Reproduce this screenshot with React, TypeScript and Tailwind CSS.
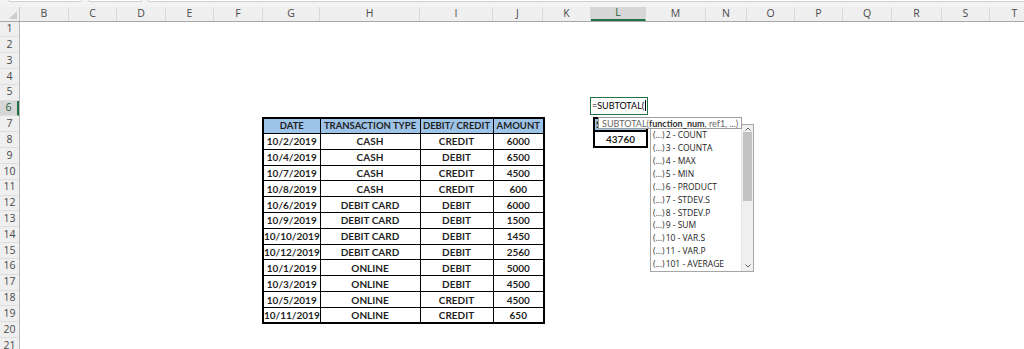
import React from 'react';

const columns = [
  { label: 'B', w: 'w-[49px]' },
  { label: 'C', w: 'w-[48px]' },
  { label: 'D', w: 'w-[49px]' },
  { label: 'E', w: 'w-[48px]' },
  { label: 'F', w: 'w-[49px]' },
  { label: 'G', w: 'w-[57px]' },
  { label: 'H', w: 'w-[100px]' },
  { label: 'I', w: 'w-[73px]' },
  { label: 'J', w: 'w-[50px]' },
  { label: 'K', w: 'w-[48px]' },
  { label: 'L', w: 'w-[55px]' },
  { label: 'M', w: 'w-[60px]' },
  { label: 'N', w: 'w-[41px]' },
  { label: 'O', w: 'w-[48px]' },
  { label: 'P', w: 'w-[48px]' },
  { label: 'Q', w: 'w-[49px]' },
  { label: 'R', w: 'w-[50px]' },
  { label: 'S', w: 'w-[48px]' },
  { label: 'T', w: 'w-[50px]' },
];

const transactions = [
  ['10/2/2019', 'CASH', 'CREDIT', '6000'],
  ['10/4/2019', 'CASH', 'DEBIT', '6500'],
  ['10/7/2019', 'CASH', 'CREDIT', '4500'],
  ['10/8/2019', 'CASH', 'CREDIT', '600'],
  ['10/6/2019', 'DEBIT CARD', 'DEBIT', '6000'],
  ['10/9/2019', 'DEBIT CARD', 'DEBIT', '1500'],
  ['10/10/2019', 'DEBIT CARD', 'DEBIT', '1450'],
  ['10/12/2019', 'DEBIT CARD', 'DEBIT', '2560'],
  ['10/1/2019', 'ONLINE', 'DEBIT', '5000'],
  ['10/3/2019', 'ONLINE', 'DEBIT', '4500'],
  ['10/5/2019', 'ONLINE', 'CREDIT', '4500'],
  ['10/11/2019', 'ONLINE', 'CREDIT', '650'],
];

const functionList = [
  '2 - COUNT',
  '3 - COUNTA',
  '4 - MAX',
  '5 - MIN',
  '6 - PRODUCT',
  '7 - STDEV.S',
  '8 - STDEV.P',
  '9 - SUM',
  '10 - VAR.S',
  '11 - VAR.P',
  '101 - AVERAGE',
];

const rowNumbers = Array.from({ length: 21 }, (_, i) => i + 1);

const uiFont = "font-['Open_Sans','Noto_Sans',sans-serif]";
const cellFont = "font-['Lato','Liberation_Sans',sans-serif]";

export default function App() {
  return (
    <div className="w-[1024px] h-[349px] overflow-hidden bg-white">
      {/* strip under the formula bar */}
      <div className="h-[7px] bg-[#f3f3f3] flex gap-[18px] pl-[8px]">
        <div className="w-[74px] h-[2px] bg-white border border-t-0 border-[#cfcfcf] rounded-b-[3px]" />
        <div className="w-[54px] h-[2px] bg-white border border-t-0 border-[#cfcfcf] rounded-b-[3px] -ml-[12px] mr-[-12px]" />
        <div className="flex-1 h-[2px] bg-white border border-t-0 border-r-0 border-[#cfcfcf] rounded-bl-[3px]" />
      </div>

      {/* column headers */}
      <div className={`flex h-[14.5px] bg-[#efefef] border-b border-[#a8a8a8] text-[10.5px] text-[#4a4a4a] ${uiFont}`}>
        <div className="w-[20px] shrink-0 relative border-r border-[#c8c8c8]">
          <div className="absolute right-[2px] bottom-[2px] w-0 h-0 border-l-[8px] border-l-transparent border-b-[8px] border-b-[#cdcdcd]" />
        </div>
        {columns.map(c => (
          <div
            key={c.label}
            className={`${c.w} shrink-0 flex items-center justify-center border-r border-[#d8d8d8] ${
              c.label === 'L' ? 'bg-[#d6d6d6] border-b-2 border-b-[#217346] text-[#1e5e36]' : ''
            }`}
          >
            {c.label}
          </div>
        ))}
      </div>

      <div className="flex">
        {/* row headers */}
        <div className={`w-[20px] shrink-0 flex flex-col bg-[#efefef] border-r border-[#b8b8b8] text-[10.5px] text-[#4a4a4a] ${uiFont}`}>
          {rowNumbers.map(n => (
            <div
              key={n}
              className={`h-[15.84px] shrink-0 flex items-center justify-center border-b border-[#dedede] ${
                n === 6 ? 'bg-[#d6d6d6] border-r-2 border-r-[#217346] text-[#1e5e36]' : ''
              }`}
            >
              {n}
            </div>
          ))}
        </div>

        {/* sheet body */}
        <div className="relative flex-1 flex flex-col">
          <div className="h-[79.2px] shrink-0" />

          {/* row 6: cell being edited */}
          <div className="h-[15.84px] shrink-0 flex">
            <div className="w-[570px] shrink-0" />
            <div className={`relative -top-[4px] w-[58px] h-[18px] border-[1.5px] border-[#217346] bg-white flex items-center pl-[1px] text-[9px] text-black whitespace-nowrap ${cellFont}`}>
              <span>=SUBTOTAL(</span>
              <span className="inline-block w-px h-[11px] bg-black ml-px" />
            </div>
          </div>

          {/* rows 7 - 19 */}
          <div className="flex">
            <div className="w-[242px] shrink-0" />
            <table className={`table-fixed w-[281px] border-collapse border-2 border-black text-[10px] font-bold text-[#1f1f1f] ${cellFont}`}>
              <colgroup>
                <col className="w-[57px]" />
                <col className="w-[100px]" />
                <col className="w-[73px]" />
                <col className="w-[51px]" />
              </colgroup>
              <thead>
                <tr className="bg-[#9dc3e6] text-[9.5px]">
                  <th className="h-[15.84px] p-0 border border-black leading-none">DATE</th>
                  <th className="h-[15.84px] p-0 border border-black leading-none whitespace-nowrap">TRANSACTION TYPE</th>
                  <th className="h-[15.84px] p-0 border border-black leading-none whitespace-nowrap">DEBIT/ CREDIT</th>
                  <th className="h-[15.84px] p-0 border border-black leading-none">AMOUNT</th>
                </tr>
              </thead>
              <tbody>
                {transactions.map(row => (
                  <tr key={row[0]}>
                    {row.map((v, i) => (
                      <td key={i} className="h-[15.84px] p-0 border border-black text-center leading-none whitespace-nowrap">
                        {v}
                      </td>
                    ))}
                  </tr>
                ))}
              </tbody>
            </table>
            <div className="w-[48px] shrink-0" />
            <div className={`flex flex-col text-[10px] font-bold text-[#1f1f1f] ${cellFont}`}>
              <div className="w-[55px] h-[15.84px] bg-[#9dc3e6] border-2 border-black flex items-center pl-[1px]">S</div>
              <div className="w-[55px] h-[16px] border-2 border-t-0 border-black flex items-center justify-center">43760</div>
            </div>
          </div>

          {/* function list dropdown */}
          <div className={`absolute left-[630px] top-[102.5px] w-[104px] h-[148px] bg-white border border-[#a6a6a6] flex ${uiFont}`}>
            <div className="flex-1 flex flex-col pt-[4px] pl-[2px]">
              {functionList.map(f => (
                <div key={f} className="h-[13px] flex items-center text-[8.5px] text-[#222] whitespace-nowrap">
                  <span className="text-[8.5px] text-[#333] mr-[1px]">(…)</span>
                  {f}
                </div>
              ))}
            </div>
            <div className="w-[12px] flex flex-col bg-[#f0f0f0] border-l border-[#e4e4e4]">
              <div className="h-[7px] flex items-center justify-center">
                <svg width="6" height="4" viewBox="0 0 6 4"><path d="M0.5 3.5 L3 1 L5.5 3.5" stroke="#606060" fill="none" strokeWidth="1" /></svg>
              </div>
              <div className="mx-[1px] h-[69px] bg-[#c2c2c2]" />
              <div className="flex-1" />
              <div className="h-[10px] flex items-center justify-center">
                <svg width="6" height="4" viewBox="0 0 6 4"><path d="M0.5 0.5 L3 3 L5.5 0.5" stroke="#606060" fill="none" strokeWidth="1" /></svg>
              </div>
            </div>
          </div>

          {/* argument tooltip */}
          <div className={`absolute left-[578px] top-[95.5px] h-[12px] px-[3px] bg-white border border-[#9e9e9e] flex items-center text-[9px] text-[#666] whitespace-nowrap leading-none ${cellFont}`}>
            <span>SUBTOTAL(</span>
            <span className="font-bold text-[#333]">function_num</span>
            <span>, ref1, ...)</span>
          </div>
        </div>
      </div>
    </div>
  );
}
